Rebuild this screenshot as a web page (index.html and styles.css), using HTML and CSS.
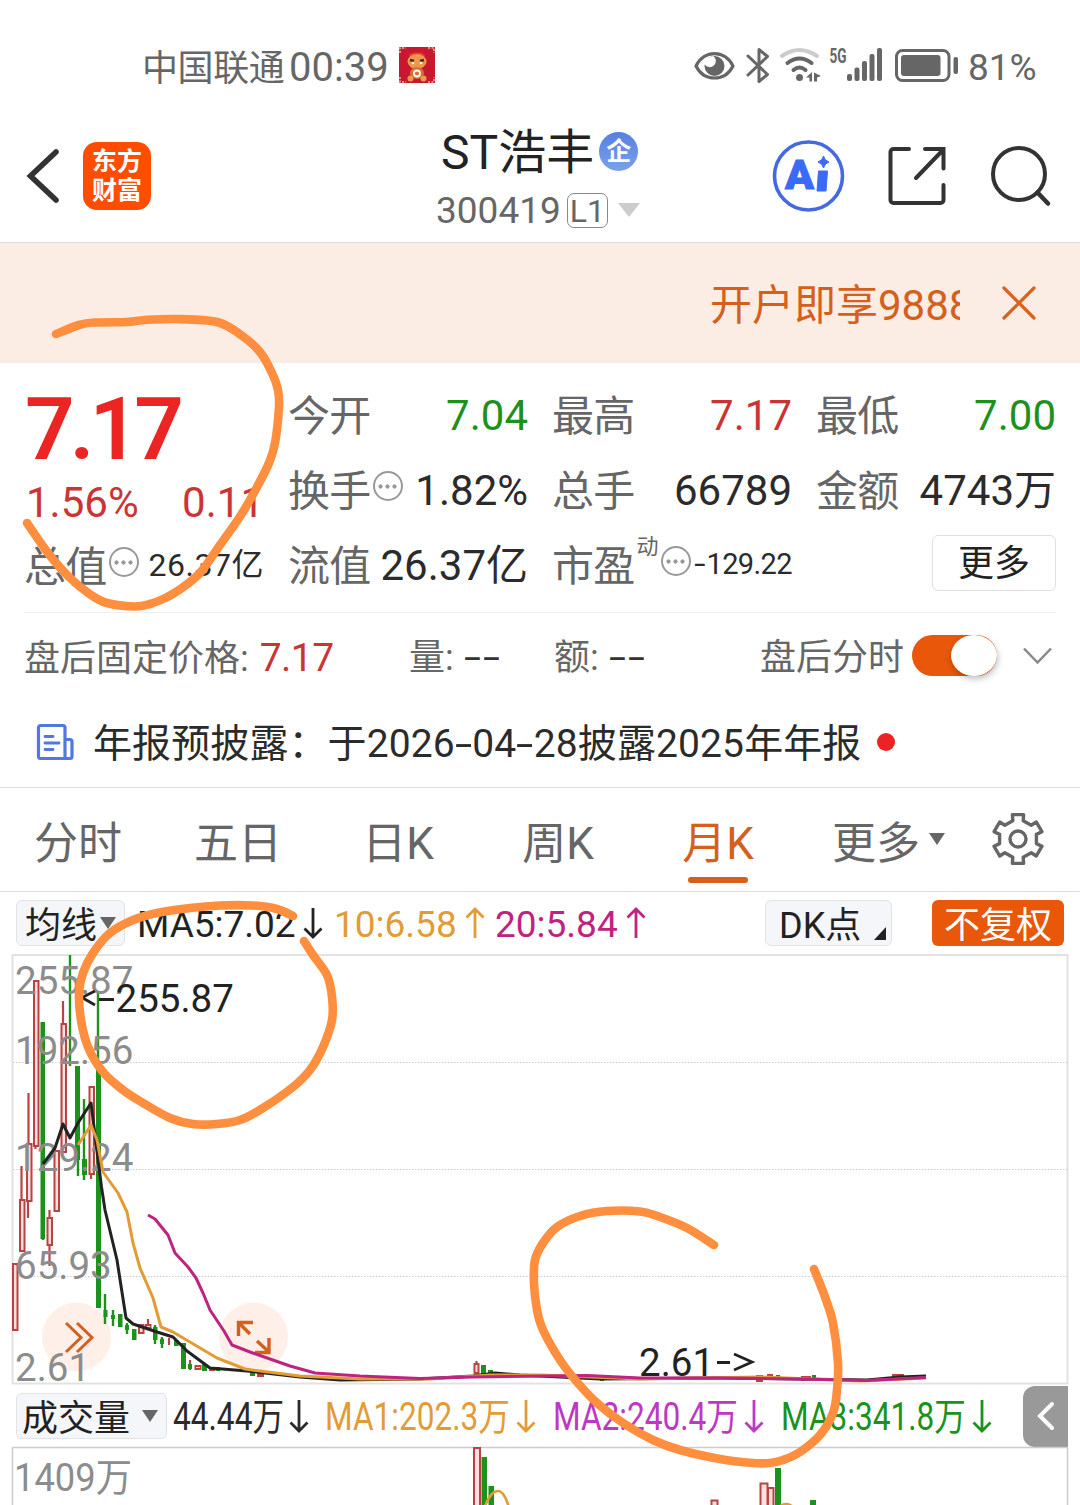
FILE: index.html
```html
<!DOCTYPE html>
<html lang="zh-CN">
<head>
  <meta charset="UTF-8">
  <meta name="viewport" content="width=device-width, initial-scale=1.0">
  <title>ST浩丰 300419</title>
  <link rel="stylesheet" href="styles.css">
</head>
<body>
  <div class="page">
    <div class="status-bar">
      <span class="carrier">中国联通</span>
      <span class="clock">00:39</span>
      <svg class="app-badge" width="36" height="36" viewBox="0 0 36 36">
        <rect width="36" height="36" fill="#c9172f"/>
        <path d="M1 6V1h6M29 1h6v5M1 30v5h6M29 35h6v-5" fill="none" stroke="#f3b9a0" stroke-width="1.500" stroke-dasharray="2 1.500"/>
        <path d="M10 9c0-5 16-5 16 0z" fill="#e8372c"/>
        <ellipse cx="18" cy="14.500" rx="9.500" ry="7.500" fill="#e99a4c"/>
        <path d="M11 13l4 1M21 14l4-1" stroke="#5a2413" stroke-width="2.500"/>
        <circle cx="14" cy="16" r="1.300" fill="#fff"/><circle cx="22" cy="16" r="1.300" fill="#fff"/>
        <ellipse cx="18" cy="26" rx="7" ry="6" fill="#d9702f"/>
        <circle cx="18" cy="26.500" r="3" fill="none" stroke="#fff" stroke-width="1.800"/>
        <circle cx="11.500" cy="31.500" r="3" fill="#e99a4c"/><circle cx="24.500" cy="31.500" r="3" fill="#e99a4c"/>
      </svg>
      <svg class="status-icons" width="270" height="40" viewBox="692 46 270 40">
        <!-- eye -->
        <path d="M696 66C704 49.500 725 49.500 733 66C725 82 704 82 696 66z" fill="none" stroke="#666" stroke-width="3.200"/>
        <circle cx="714.500" cy="66" r="10" fill="#666"/>
        <path d="M704 60a6 6 0 1 0 9-4z" fill="#fff"/>
        <!-- bluetooth -->
        <path d="M748 56l19.500 18.500l-8.500 7V49.500l8.500 7L748 75" fill="none" stroke="#666" stroke-width="3" stroke-linejoin="round" stroke-linecap="round"/>
        <!-- wifi -->
        <g fill="none" stroke-width="4" stroke-linecap="round">
          <path d="M782 56q17-12 35 0" stroke="#ccc"/>
          <path d="M787.500 63q12-9 24 0" stroke="#666"/>
          <path d="M793.500 70q6-5 12 0" stroke="#666"/>
        </g>
        <circle cx="799.500" cy="77.500" r="3.500" fill="#666"/>
        <path d="M806 77.500l6-5.500v9.500h-2.500v-4zM814 72.500l7 3.500l-4 1.500v4h-3z" fill="#666"/>
        <text x="829.500" y="63" class="net-label" textLength="17" lengthAdjust="spacingAndGlyphs">5G</text>
        <g fill="#666">
          <rect x="847" y="74" width="5" height="7" rx="2"/>
          <rect x="854.500" y="67.500" width="5" height="13.500" rx="2"/>
          <rect x="862" y="61" width="5" height="20" rx="2"/>
          <rect x="869.500" y="54" width="5" height="27" rx="2"/>
          <rect x="877" y="48" width="5" height="33" rx="2"/>
        </g>
        <!-- battery -->
        <rect x="896.500" y="50.500" width="52.500" height="30" rx="6" fill="none" stroke="#666" stroke-width="3"/>
        <rect x="901" y="55" width="39.500" height="21" rx="3" fill="#666"/>
        <rect x="953.500" y="57" width="4.500" height="17" rx="2" fill="#666"/>
      </svg>
      <span class="battery">81%</span>
    </div>

    <header class="header">
      <svg class="back" width="36" height="60" viewBox="0 0 36 60">
        <path d="M31 6L5.500 30L31 54" fill="none" stroke="#333" stroke-width="5.600" stroke-linecap="round"/>
      </svg>
      <div class="logo"><span>东方</span><span>财富</span></div>
      <div class="stock">
        <div class="stock-name">ST浩丰<span class="corp">企</span></div>
        <div class="stock-code">300419<span class="level">L1</span><i class="code-caret"></i></div>
      </div>
      <svg class="ai" width="74" height="74" viewBox="0 0 74 74">
        <circle cx="36.500" cy="37" r="34" fill="none" stroke="#456ae0" stroke-width="3.600"/>
        <text x="13" y="50" class="ai-label" textLength="29" lengthAdjust="spacingAndGlyphs">A</text>
        <path d="M46.500 32h9l-1.500 20h-9z" fill="#3b6af5" stroke="#3b6af5" stroke-linejoin="round"/>
        <path d="M51.500 17q1 4.500 5.500 6q-4.500 1.500-5.500 6q-1-4.500-5.500-6q4.500-1.500 5.500-6z" fill="#3b6af5" stroke="#3b6af5"/>
      </svg>
      <svg class="share" width="60" height="60" viewBox="0 0 60 60">
        <path d="M22 3H6.500a3 3 0 0 0-3 3V54a3 3 0 0 0 3 3H53.500a3 3 0 0 0 3-3V39M38 3H56.500V22.500M55 5L29 32" fill="none" stroke="#333" stroke-width="4" stroke-linecap="round"/>
        <path d="M50 3H56.500V10z" fill="#333"/>
      </svg>
      <svg class="search" width="62" height="62" viewBox="0 0 62 62">
        <circle cx="29" cy="29" r="26" fill="none" stroke="#333" stroke-width="4"/>
        <path d="M47.500 47.500L58 58.500" stroke="#333" stroke-width="4.500" stroke-linecap="round"/>
      </svg>
    </header>

    <div class="banner">
      <div class="banner-text">开户即享9888</div>
      <svg width="34" height="34" viewBox="0 0 34 34">
        <path d="M2 2L32 32M32 2L2 32" stroke="#d9621c" stroke-width="3.200" stroke-linecap="round"/>
      </svg>
    </div>

    <section class="quote">
      <div class="quote-main">
        <div class="price">7.17</div>
        <div class="change"><span>1.56%</span><span>0.11</span></div>
        <div class="cell"><label>总值</label><i class="more-dot"></i><b class="small">26.37亿</b></div>
      </div>
      <div class="quote-grid">
        <div class="cell"><label>今开</label><b class="green">7.04</b></div>
        <div class="cell"><label>最高</label><b class="red">7.17</b></div>
        <div class="cell"><label>最低</label><b class="green">7.00</b></div>
        <div class="cell"><label>换手</label><i class="more-dot"></i><b>1.82%</b></div>
        <div class="cell"><label>总手</label><b>66789</b></div>
        <div class="cell"><label>金额</label><b>4743万</b></div>
        <div class="cell"><label>流值</label><b>26.37亿</b></div>
        <div class="cell"><label>市盈</label><sup>动</sup><i class="more-dot"></i><b class="small pe"><span class="minus">-</span>129.22</b></div>
        <div class="cell"><button class="more-btn">更多</button></div>
      </div>
    </section>

    <div class="after-hours">
      <span class="ah-price">盘后固定价格: <b>7.17</b></span>
      <span class="ah-vol">量: <b class="dash">-</b><b class="dash">-</b></span>
      <span class="ah-amt">额: <b class="dash">-</b><b class="dash">-</b></span>
      <span class="ah-toggle">盘后分时</span>
      <i class="toggle"></i>
      <svg width="34" height="22" viewBox="0 0 34 22">
        <path d="M3 2.500L16.500 16.500L30 2.500" fill="none" stroke="#888" stroke-width="2.500"/>
      </svg>
    </div>

    <div class="news">
      <svg width="38" height="38" viewBox="0 0 38 38">
        <path d="M29 35.500H4.500a2 2 0 0 1-2-2V4.500a2 2 0 0 1 2-2H27a2 2 0 0 1 2 2zM29 16.500h5a2 2 0 0 1 2 2v15a2 2 0 0 1-2 2h-5z" fill="none" stroke="#5278dc" stroke-width="3.200"/>
        <path d="M9 13.500h8M9 20h14M9 26.500h8" stroke="#5278dc" stroke-width="2.800" stroke-linecap="round"/>
      </svg>
      <span class="news-text">年报预披露：于2026<span class="dash">-</span>04<span class="dash">-</span>28披露2025年年报</span>
      <i class="news-dot"></i>
    </div>

    <nav class="tabs">
      <a>分时</a>
      <a>五日</a>
      <a>日K</a>
      <a>周K</a>
      <a class="active">月K</a>
      <a class="tab-more">更多<i class="caret"></i></a>
      <svg width="54" height="54" viewBox="-27 -27 54 54">
        <path d="M-5.200-18.300L-5.600-24.400H5.600L5.200-18.300L13.200-13.700L18.300-17L23.900-7.300L18.400-4.600V4.600L23.900 7.300L18.300 17L13.200 13.700L5.200 18.300L5.600 24.400H-5.600L-5.200 18.300L-13.200 13.700L-18.300 17L-23.900 7.300L-18.400 4.600V-4.600L-23.900-7.300L-18.300-17L-13.200-13.700z" fill="none" stroke="#666" stroke-width="3.400" stroke-linejoin="round"/>
        <circle r="8" fill="none" stroke="#666" stroke-width="3.400"/>
      </svg>
    </nav>

    <div class="ma-bar">
      <span class="chip chip-ma"><em>均线</em><i class="caret"></i></span>
      <span class="ma ma5"><em>MA5:7.02</em><svg width="20" height="32" viewBox="0 0 20 32"><path d="M10 1V30M1.500 21.500L10 30L18.500 21.500"/></svg></span>
      <span class="ma ma10"><em>10:6.58</em><svg width="20" height="32" viewBox="0 0 20 32"><path d="M10 31V2M1.500 10.500L10 2L18.500 10.500"/></svg></span>
      <span class="ma ma20"><em>20:5.84</em><svg width="20" height="32" viewBox="0 0 20 32"><path d="M10 31V2M1.500 10.500L10 2L18.500 10.500"/></svg></span>
      <span class="chip chip-dk"><em>DK点</em><i></i></span>
      <span class="chip chip-fq"><em>不复权</em></span>
    </div>

    <svg class="chart" width="1080" height="431" viewBox="0 954 1080 431">
      <rect x="12.500" y="955" width="1055" height="428.500" fill="none" stroke="#e2e2e2" stroke-width="2"/>
      <path d="M13 1062.500H1067M13 1169.500H1067M13 1276.500H1067" stroke="#ccc" stroke-dasharray="1.500 1.500"/>
      <circle cx="76.500" cy="1337" r="34.500" fill="#feefe8"/>
      <circle cx="253.500" cy="1337" r="34.500" fill="#feefe8"/>
      <path d="M66 1323L81 1337.500L66 1352M77 1323L92 1337.500L77 1352" fill="none" stroke="#d2601f" stroke-width="3"/>
      <path d="M253 1322.500H238.500V1336M239 1323L250 1334M269 1338V1352.500H255M269 1352L257 1341" fill="none" stroke="#d2601f" stroke-width="3.400"/>

      <!-- wicks -->
      <path class="up-wick" d="M21.500 1166V1199M28.500 1093V1143M28 1202V1218M49.500 1210V1266M63 1001V1023M35.500 1147V1149M91 1175V1179M148 1319V1330M169 1338V1345M190 1360V1370M476.500 1361V1365"/>
      <path class="down-wick" d="M70 955V1066M43 1238V1240M78 1160V1176M84 1099V1180M98 992V1066M105 1294V1324M113 1310V1326M127 1323V1334M162 1337V1348M155 1325V1344"/>
      <!-- candle bodies -->
      <g class="up">
        <rect x="13" y="1264" width="4.500" height="66"/>
        <rect x="20" y="1200" width="4.500" height="51"/>
        <rect x="27" y="1144" width="4.500" height="57"/>
        <rect x="34" y="981" width="4.500" height="165"/>
        <rect x="47.500" y="1218" width="4.500" height="27"/>
        <rect x="54.500" y="1151" width="4.500" height="60"/>
        <rect x="61.500" y="1024" width="4.500" height="128"/>
        <rect x="89.500" y="1087" width="4.500" height="87"/>
        <rect x="139" y="1325" width="4.500" height="8"/>
        <rect x="146" y="1325" width="4.500" height="3"/>
        <rect x="195.500" y="1366" width="5" height="3"/>
        <rect x="210" y="1368" width="4.500" height="2"/>
        <rect x="258" y="1374" width="5" height="2"/>
        <rect x="474.500" y="1364" width="4" height="9"/>
        <rect x="757" y="1376" width="5" height="5"/>
        <rect x="768" y="1375" width="4" height="2"/>
        <rect x="802" y="1377" width="8" height="3"/>
        <rect x="893" y="1375" width="10" height="3"/>
      </g>
      <g class="down">
        <rect x="40.500" y="1022" width="4.500" height="217"/>
        <rect x="75" y="1066" width="5" height="94"/>
        <rect x="82" y="1159" width="5" height="16"/>
        <rect x="96" y="1065" width="5" height="243"/>
        <rect x="103.500" y="1310" width="4" height="7"/>
        <rect x="111" y="1315" width="4" height="4"/>
        <rect x="118" y="1314" width="4.500" height="13"/>
        <rect x="125" y="1325" width="4" height="5"/>
        <rect x="132" y="1329" width="4.500" height="11"/>
        <rect x="153" y="1327" width="4.500" height="13"/>
        <rect x="160" y="1339" width="4" height="5"/>
        <rect x="174" y="1340" width="4.500" height="6"/>
        <rect x="181" y="1343" width="5" height="26"/>
        <rect x="188" y="1364" width="4" height="5"/>
        <rect x="202" y="1364" width="5" height="7"/>
        <rect x="216" y="1367" width="4" height="4"/>
        <rect x="250" y="1372" width="5" height="4"/>
        <rect x="481" y="1365" width="5" height="9"/>
        <rect x="488" y="1370" width="5" height="4"/>
        <rect x="600" y="1377" width="4" height="4"/>
        <rect x="776" y="1375" width="4" height="5"/>
        <rect x="812" y="1375" width="4" height="5"/>
      </g>

      <g class="axis">
        <text x="15" y="994">255.87</text>
        <text x="15" y="1063.500">192.56</text>
        <text x="15" y="1171">129.24</text>
        <text x="15" y="1278.500">65.93</text>
        <text x="15" y="1381">2.61</text>
      </g>

      <!-- moving averages -->
      <g fill="none" stroke-width="3" stroke-linejoin="round">
        <path stroke="#222" d="M43 1164L55 1148L63 1124L70 1138L78 1123L91 1103L101.500 1187L105 1210L117 1260L126 1318L133 1324L157 1332L173 1337L187 1351L210 1368L247 1371L300 1377L340 1380L420 1379L473 1376L495 1373L520 1375L600 1379L720 1378L867 1380L900 1377L926 1376"/>
        <path stroke="#e29c36" d="M78 1145L91 1125L97 1140L103 1172L118 1193L127 1212L133 1243L140 1268L153 1298L161 1327L173 1332L217 1358L245 1369L300 1376L360 1379L430 1379L490 1375L540 1375L640 1379L760 1377L860 1381L926 1378"/>
        <path stroke="#bf2380" d="M148 1215L155 1219L168 1235L175 1253L188 1267L196 1278L203 1293L210 1310L224 1331L232 1345L250 1352L290 1366L315 1373L360 1376L420 1378.500L473 1377L587 1375.500L640 1378L720 1378L800 1379L867 1380.500L926 1377.500"/>
      </g>
      <g class="mark">
        <path d="M95 991L82 997.500L95 1005M99 999.500H114M717 1362.500H730M734 1354L752 1362L734 1370" fill="none" stroke="#222" stroke-width="2.800"/>
        <text x="115.500" y="1012">255.87</text>
        <text x="639" y="1376">2.61</text>
      </g>
    </svg>

    <div class="vol-bar">
      <span class="chip chip-vol"><em>成交量</em><i class="caret"></i></span>
      <span class="vol v0"><em>44.44万</em><svg width="20" height="34" viewBox="0 0 20 34"><path d="M10 1V32M1.500 23.500L10 32L18.500 23.500"/></svg></span>
      <span class="vol v1"><em>MA1:202.3万</em><svg width="20" height="34" viewBox="0 0 20 34"><path d="M10 1V32M1.500 23.500L10 32L18.500 23.500"/></svg></span>
      <span class="vol v2"><em>MA2:240.4万</em><svg width="20" height="34" viewBox="0 0 20 34"><path d="M10 1V32M1.500 23.500L10 32L18.500 23.500"/></svg></span>
      <span class="vol v3"><em>MA3:341.8万</em><svg width="20" height="34" viewBox="0 0 20 34"><path d="M10 1V32M1.500 23.500L10 32L18.500 23.500"/></svg></span>
      <span class="drawer">
        <svg width="20" height="30" viewBox="0 0 20 30"><path d="M16 3L4 15L16 27" fill="none" stroke="#fff" stroke-width="4" stroke-linecap="round"/></svg>
      </span>
    </div>

    <svg class="chart" width="1080" height="58" viewBox="0 1447 1080 58">
      <path d="M12.500 1505V1447.500H1067.500V1505" fill="none" stroke="#ccc" stroke-width="1.500"/>
      <g class="up">
        <rect x="474" y="1448" width="6" height="60"/>
        <rect x="711.500" y="1500.500" width="6" height="10"/>
        <rect x="760.500" y="1483.500" width="7" height="30"/>
        <rect x="768" y="1488" width="5.500" height="30"/>
      </g>
      <g class="down">
        <rect x="481.500" y="1457" width="5.500" height="50"/>
        <rect x="488.500" y="1486" width="5.500" height="20"/>
        <rect x="775" y="1468" width="6" height="40"/>
        <rect x="810" y="1500" width="6" height="8"/>
      </g>
      <path d="M485 1506Q491 1491 498 1491Q504 1491 508.500 1506M780 1506Q786 1502 792 1506" fill="none" stroke="#e29c36" stroke-width="2.600"/>
      <g class="axis"><text x="14" y="1491" textLength="118" lengthAdjust="spacingAndGlyphs">1409万</text></g>
    </svg>

    <!-- hand-drawn marker circles -->
    <svg class="marker" width="1080" height="1505" viewBox="0 0 1080 1505">
      <path id="circle-price"/>
      <path id="circle-high"/>
      <path id="circle-low"/>
    </svg>
  </div>
  <script>
    const strokes = {
      'circle-price': [56,334, 79,325, 96,322.5, 127,322, 145,320, 176,319, 217,322, 241,335, 260,352, 272,373, 278,390, 279,407, 275,443, 269,463, 257,487, 241,515, 220,545, 200,573, 179,590, 165,598, 150,604, 134,606.5, 107,603, 91,595, 69,577, 48,553, 27,523],
      'circle-high': [293,916, 277,909, 253,905.5, 220,905.5, 190,908, 157,913, 133,920, 110,933, 93,953, 83,973, 79,993, 81,1020, 88,1047, 103,1072, 123,1090, 143,1103, 170,1118, 193,1124, 217,1124, 240,1120, 263,1108, 293,1087, 310,1070, 323,1047, 332,1020, 332,997, 327,975, 313,955, 304,941],
      'circle-low': [714,1245, 687,1228, 660,1217, 640,1211.5, 607,1211, 580,1216, 557,1227, 543,1243, 535,1260, 534,1283, 537,1310, 543,1330, 560,1360, 577,1382, 597,1403, 623,1423, 653,1440, 680,1450, 720,1459, 753,1463, 770,1463, 783,1460, 800,1452, 820,1435, 833,1413, 837,1390, 838,1363, 833,1323, 825,1297, 814,1269]
    };

    // smooth curve through all points
    function smoothPath(p) {
      const n = p.length / 2;
      const at = (i) => {
        const k = Math.max(0, Math.min(n - 1, i)) * 2;
        return [p[k], p[k + 1]];
      };
      let d = 'M' + at(0);
      for (let i = 0; i < n - 1; i++) {
        const a = at(i - 1), b = at(i), c = at(i + 1), e = at(i + 2);
        d += 'C' + [
          b[0] + (c[0] - a[0]) / 6, b[1] + (c[1] - a[1]) / 6,
          c[0] - (e[0] - b[0]) / 6, c[1] - (e[1] - b[1]) / 6,
          c[0], c[1]
        ];
      }
      return d;
    }

    for (const id in strokes) {
      document.getElementById(id).setAttribute('d', smoothPath(strokes[id]));
    }
  </script>
</body>
</html>
```
FILE: styles.css
```css
* {
  box-sizing: border-box;
}

body {
  margin: 0;
  background: #fff;
  color: #2b2b2b;
  font-family: Roboto, "Noto Sans CJK SC", sans-serif;
}

i, em {
  font-style: normal;
}

b {
  font-weight: 400;
}

svg {
  display: block;
  flex: none;
  overflow: visible;
}

.page {
  position: relative;
  width: 1080px;
  height: 1505px;
  overflow: hidden;
  white-space: nowrap;
}

/* status bar */
.status-bar {
  display: flex;
  align-items: center;
  height: 110px;
  padding: 22px 0 0 142px;
  color: #666;
  line-height: 44px;
}

.carrier {
  width: 147px;
  padding-top: 6px;
  font-size: 36px;
  letter-spacing: -0.4px;
}

.clock {
  width: 110px;
  padding-top: 4px;
  font-size: 40px;
}

.app-badge {
  margin-top: -3px;
}

.status-icons {
  margin-left: 257px;
}

.net-label {
  font-size: 20px;
  font-weight: 700;
  fill: #666;
}

.battery {
  margin-left: 6px;
  padding-top: 4px;
  font-size: 37px;
}

/* header */
.header {
  display: flex;
  align-items: center;
  height: 133px;
  padding-left: 25px;
  border-bottom: 1px solid #ddd;
}

.logo {
  display: flex;
  flex-direction: column;
  align-items: center;
  justify-content: center;
  width: 68px;
  height: 68px;
  margin-left: 22px;
  border-radius: 14px;
  background: #ff4d00;
  color: #fff;
  font-size: 25px;
  font-weight: 700;
  line-height: 29px;
}

.stock {
  width: 206px;
  margin-left: 285px;
  padding-top: 10px;
}

.stock-name {
  display: flex;
  align-items: center;
  height: 58px;
  padding-left: 5px;
  color: #222;
  font-size: 48px;
  line-height: 61px;
}

.corp {
  width: 39px;
  height: 39px;
  margin-left: 5px;
  margin-top: -2px;
  border-radius: 50%;
  background: linear-gradient(#5580de, #7ba1ea);
  color: #fff;
  font-size: 25px;
  font-weight: 700;
  line-height: 39px;
  text-align: center;
}

.stock-code {
  display: flex;
  align-items: center;
  height: 58px;
  color: #666;
  font-size: 37px;
  line-height: 61px;
}

.level {
  width: 41px;
  height: 35px;
  margin-left: 6px;
  border: 1.5px solid #888;
  border-radius: 7px;
  font-size: 32px;
  line-height: 34px;
  text-align: center;
}

.code-caret {
  margin-left: 10px;
  border: 11px solid transparent;
  border-top: 14px solid #ccc;
  border-bottom: 0;
}

.ai {
  margin-left: 130px;
}

.ai-label {
  fill: #3b6af5;
  stroke: #3b6af5;
  stroke-width: 1px;
  font-size: 41px;
  font-weight: 900;
}

.share {
  margin-left: 41px;
}

.search {
  margin-left: 43px;
}

/* promo banner */
.banner {
  display: flex;
  align-items: center;
  justify-content: flex-end;
  height: 120px;
  padding-right: 44px;
  background: #fcede4;
}

/* scrolling text, clipped on the right */
.banner-text {
  width: 250px;
  margin-right: 42px;
  padding-top: 5px;
  overflow: hidden;
  color: #d4601c;
  font-size: 42px;
  line-height: 60px;
}

/* quote block */
.quote {
  display: flex;
  gap: 24px;
  height: 250px;
  margin: 0 24px;
  padding-top: 15px;
  border-bottom: 1px solid #eee;
}

.quote-main {
  width: 240px;
}

.price {
  height: 98px;
  padding-left: 1px;
  color: #eb2424;
  font-size: 87px;
  font-weight: 600;
  line-height: 103px;
  letter-spacing: -5px;
}

.change {
  display: flex;
  justify-content: space-between;
  height: 53px;
  padding-left: 2px;
  color: #cb3434;
  font-size: 42px;
  line-height: 53px;
}

.quote-grid {
  display: grid;
  grid-template-columns: repeat(3, 240px);
  grid-auto-rows: 75px;
  column-gap: 24px;
}

.cell {
  display: flex;
  align-items: center;
  height: 75px;
  font-size: 42px;
  line-height: 75px;
}

.cell label {
  padding-top: 2px;
  color: #666;
  letter-spacing: -0.7px;
}

.cell b {
  margin-left: auto;
}

.cell .green {
  color: #1d901d;
}

.cell .red {
  color: #cb3434;
}

.cell .small {
  margin-top: -2px;
  font-size: 32px;
  letter-spacing: 0.5px;
}

.cell .pe {
  font-size: 29px;
  letter-spacing: -0.6px;
}

.minus {
  display: inline-block;
  width: 13px;
  text-align: center;
  transform: scaleX(1.4);
}

.cell sup {
  height: 62px;
  margin-left: 2px;
  color: #666;
  font-size: 22px;
  line-height: 24px;
}

.more-dot {
  flex: none;
  width: 30px;
  height: 30px;
  margin-top: -9px;
  margin-left: 2px;
  padding: 0 2.5px;
  border: 2px solid #999;
  border-radius: 50%;
  background: radial-gradient(circle, #999 1.8px, transparent 2.4px) 0 50% / 7px 7px repeat-x content-box;
}

.more-btn {
  width: 124px;
  height: 56px;
  margin-left: auto;
  margin-top: -6px;
  padding: 2px 0 0;
  border: 1.5px solid #e0e0e0;
  border-radius: 6px;
  background: #fff;
  color: #222;
  font-family: inherit;
  font-size: 36px;
  line-height: 52px;
}

/* after-hours row */
.after-hours {
  display: flex;
  align-items: center;
  height: 87px;
  padding-left: 24px;
  color: #666;
  font-size: 36px;
  line-height: 87px;
}

.after-hours span {
  padding-top: 4px;
}

.ah-price {
  width: 385px;
}

.ah-price b {
  margin-left: 2px;
  color: #cb3434;
  font-size: 39px;
  letter-spacing: -0.5px;
}

.ah-vol {
  width: 145px;
}

.ah-amt {
  width: 206px;
}

.after-hours .dash {
  width: 19px;
  color: #333;
  transform: scaleX(1.7);
}

.ah-toggle {
  width: 152px;
}

.toggle {
  width: 85px;
  height: 41px;
  margin-top: -2px;
  border-radius: 21px;
  background: #e8570a;
}

.toggle::after {
  content: '';
  display: block;
  width: 46px;
  height: 41px;
  margin-left: 39px;
  border-radius: 50%;
  background: #fff;
  box-shadow: 1px 3px 6px rgba(0, 0, 0, 0.25);
}

.after-hours > svg {
  margin-left: 24px;
}

/* news */
.news {
  display: flex;
  align-items: center;
  height: 88px;
  padding-left: 36px;
  border-bottom: 1px solid #ddd;
}

.news svg {
  margin-top: -4px;
}

.news-text {
  margin-left: 19px;
  font-size: 39px;
  line-height: 86px;
  letter-spacing: 0.1px;
}

.dash {
  display: inline-block;
  width: 17.5px;
  text-align: center;
  transform: scaleX(1.6);
}

.news-dot {
  width: 18px;
  height: 18px;
  margin-left: 16px;
  margin-top: -4px;
  border-radius: 50%;
  background: #ee2222;
}

/* period tabs */
.tabs {
  display: flex;
  align-items: center;
  height: 104px;
  margin-left: -2px;
  border-bottom: 1px solid #ddd;
  color: #666;
  font-size: 44px;
  line-height: 112px;
}

.tabs a {
  width: 160px;
  height: 103px;
  text-align: center;
}

.tabs .active {
  color: #d4601c;
}

.tabs .active::after {
  content: '';
  display: block;
  width: 60px;
  height: 6px;
  margin: -23px auto 0;
  border-radius: 3px;
  background: #d4601c;
}

.tabs .tab-more {
  display: flex;
  align-items: center;
  padding-top: 9px;
  padding-left: 34px;
  width: 193px;
}

.caret {
  border: 8px solid transparent;
  border-top: 12px solid #666;
  border-bottom: 0;
}

.tab-more .caret {
  margin-left: 9px;
  margin-top: -10px;
}

.tabs svg {
  margin-top: -1px;
}

/* indicator bars */
.ma-bar,
.vol-bar {
  display: flex;
  align-items: center;
  height: 62px;
  padding-left: 16px;
}

.chip {
  display: flex;
  align-items: center;
  flex: none;
  height: 46px;
  border: 1px solid #e0e3e8;
  border-radius: 6px;
  background: #f5f6f9;
  color: #222;
  font-size: 36px;
  line-height: 44px;
}

.chip em {
  padding-top: 5px;
}

.chip-ma {
  width: 109px;
  margin-right: 12px;
  padding-left: 8px;
}

.chip-ma .caret {
  margin-left: 3px;
}

.ma {
  display: flex;
  align-items: center;
  font-size: 37px;
  line-height: 62px;
}

.ma em {
  padding-top: 3px;
}

.ma svg,
.vol svg {
  fill: none;
  stroke: currentColor;
  stroke-width: 2.8px;
}

.ma svg {
  margin-left: 8px;
}

.ma5 {
  width: 197px;
  color: #222;
}

.ma5 svg {
  margin-left: auto;
  margin-right: 11px;
}

.ma10 {
  width: 161px;
  color: #e29c36;
}

.ma20 {
  width: 270px;
  color: #bf2380;
}

.chip-dk {
  width: 127px;
  padding-left: 13px;
}

.chip-dk i {
  margin: 20px 0 0 13px;
  border-left: 12px solid transparent;
  border-bottom: 13px solid #222;
}

.chip-fq {
  width: 132px;
  margin-left: 40px;
  justify-content: center;
  border: 0;
  background: #e8570a;
  color: #fff;
}

/* charts */
.axis text {
  fill: #8c8c8c;
  font-size: 38.5px;
}

.mark text {
  fill: #222;
  font-size: 38.5px;
}

.up {
  fill: #ffdede;
  stroke: #b94343;
  stroke-width: 2px;
}

.down {
  fill: #1b921b;
}

.up-wick {
  stroke: #b94343;
  stroke-width: 2.2px;
}

.down-wick {
  stroke: #1b921b;
  stroke-width: 2.4px;
}

.chip-vol {
  width: 151px;
  padding-left: 5px;
}

.chip-vol .caret {
  margin-left: 12px;
}

.vol {
  display: flex;
  align-items: center;
  font-size: 38px;
  line-height: 64px;
}

.vol em {
  width: 183px;
  padding-top: 2px;
  transform: scaleX(0.832);
  transform-origin: left;
}

.vol svg {
  margin-left: 8px;
}

.v0 {
  width: 152px;
  margin-left: 6px;
}

.v0 em {
  width: 108px;
}

.v1 {
  width: 228px;
  color: #e29c36;
}

.v2 {
  width: 228px;
  color: #bd38c4;
}

.v3 {
  width: 242px;
  color: #1b921b;
}

.drawer {
  display: flex;
  align-items: center;
  justify-content: center;
  width: 45px;
  height: 61px;
  border-radius: 12px 0 0 12px;
  background: #999;
}

.marker {
  position: absolute;
  top: 0;
  left: 0;
  fill: none;
  stroke: #ff8f3f;
  stroke-width: 8.6px;
  stroke-linecap: round;
  stroke-linejoin: round;
  pointer-events: none;
}
```
